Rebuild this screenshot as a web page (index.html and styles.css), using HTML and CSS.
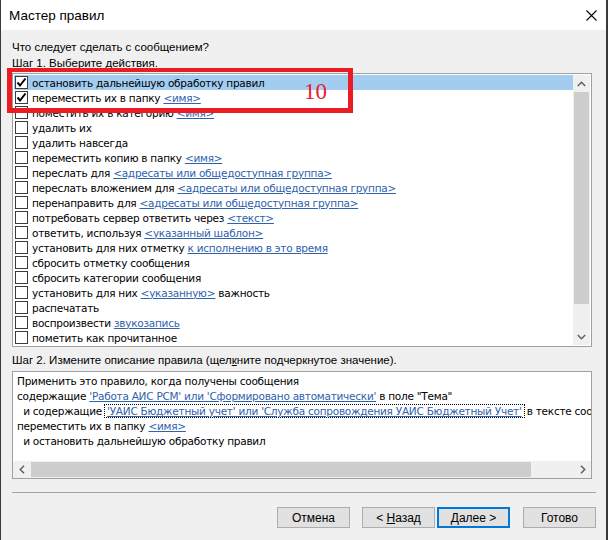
FILE: index.html
```html
<!DOCTYPE html>
<html lang="ru">
<head>
<meta charset="utf-8">
<title>Мастер правил</title>
<link rel="stylesheet" href="styles.css">
</head>
<body>
<div class="window">
  <div class="titlebar">
    <span class="title">Мастер правил</span>
    <span class="close"><svg width="11" height="11" viewBox="0 0 11 11"><path d="M0.5 0.5L10.5 10.5M10.5 0.5L0.5 10.5" stroke="#000" stroke-width="1.1" fill="none"/></svg></span>
  </div>
  <div class="content">
    <div class="label q">Что следует сделать с сообщением?</div>
    <div class="label">Шаг 1. Выберите действия.</div>
    <div class="listbox">
      <ul class="rows">
        <li class="row selected"><span class="cb"><svg width="11" height="11" viewBox="0 0 11 11"><path d="M1.5 5.5L4 8.5L9.5 1.5" stroke="#000" stroke-width="2" fill="none"/></svg></span>остановить дальнейшую обработку правил</li>
        <li class="row"><span class="cb"><svg width="11" height="11" viewBox="0 0 11 11"><path d="M1.5 5.5L4 8.5L9.5 1.5" stroke="#000" stroke-width="2" fill="none"/></svg></span>переместить их в папку&nbsp;<span class="link">&lt;имя&gt;</span></li>
        <li class="row"><span class="cb"></span>поместить их в категорию&nbsp;<span class="link">&lt;имя&gt;</span></li>
        <li class="row"><span class="cb"></span>удалить их</li>
        <li class="row"><span class="cb"></span>удалить навсегда</li>
        <li class="row"><span class="cb"></span>переместить копию в папку&nbsp;<span class="link">&lt;имя&gt;</span></li>
        <li class="row"><span class="cb"></span>переслать для&nbsp;<span class="link">&lt;адресаты или общедоступная группа&gt;</span></li>
        <li class="row"><span class="cb"></span>переслать вложением для&nbsp;<span class="link">&lt;адресаты или общедоступная группа&gt;</span></li>
        <li class="row"><span class="cb"></span>перенаправить для&nbsp;<span class="link">&lt;адресаты или общедоступная группа&gt;</span></li>
        <li class="row"><span class="cb"></span>потребовать сервер ответить через&nbsp;<span class="link">&lt;текст&gt;</span></li>
        <li class="row"><span class="cb"></span>ответить, используя&nbsp;<span class="link">&lt;указанный шаблон&gt;</span></li>
        <li class="row"><span class="cb"></span>установить для них отметку&nbsp;<span class="link">к исполнению в это время</span></li>
        <li class="row"><span class="cb"></span>сбросить отметку сообщения</li>
        <li class="row"><span class="cb"></span>сбросить категории сообщения</li>
        <li class="row"><span class="cb"></span>установить для них&nbsp;<span class="link">&lt;указанную&gt;</span>&nbsp;важность</li>
        <li class="row"><span class="cb"></span>распечатать</li>
        <li class="row"><span class="cb"></span>воспроизвести&nbsp;<span class="link">звукозапись</span></li>
        <li class="row"><span class="cb"></span>пометить как прочитанное</li>
      </ul>
      <div class="vscroll">
        <span class="sarrow"><svg width="9" height="6" viewBox="0 0 9 6"><path d="M0.8 5L4.5 1.3L8.2 5" stroke="#606060" stroke-width="1.5" fill="none"/></svg></span>
        <div class="vtrack"><div class="vthumb"></div></div>
        <span class="sarrow"><svg width="9" height="6" viewBox="0 0 9 6"><path d="M0.8 1L4.5 4.7L8.2 1" stroke="#606060" stroke-width="1.5" fill="none"/></svg></span>
      </div>
    </div>
    <div class="label step2">Шаг 2. Измените описание правила (щел<u>к</u>ните подчеркнутое значение).</div>
    <div class="desc">
      <div class="desc-text">
        <div class="dline">Применить это правило, когда получены сообщения</div>
        <div class="dline">содержащие <span class="link">'Работа АИС РСМ' или 'Сформировано автоматически'</span> в поле "Тема"</div>
        <div class="dline">  и содержащие <span class="link focus">'УАИС Бюджетный учет' или 'Служба сопровождения УАИС Бюджетный Учет'</span> в тексте сообщения</div>
        <div class="dline">переместить их в папку <span class="link">&lt;имя&gt;</span></div>
        <div class="dline">  и остановить дальнейшую обработку правил</div>
      </div>
      <div class="hscroll">
        <span class="sarrow"><svg width="6" height="9" viewBox="0 0 6 9"><path d="M5 0.8L1.3 4.5L5 8.2" stroke="#606060" stroke-width="1.5" fill="none"/></svg></span>
        <div class="htrack"><div class="hthumb"></div></div>
        <span class="sarrow"><svg width="6" height="9" viewBox="0 0 6 9"><path d="M1 0.8L4.7 4.5L1 8.2" stroke="#606060" stroke-width="1.5" fill="none"/></svg></span>
      </div>
    </div>
    <div class="separator"></div>
    <div class="buttons">
      <button class="btn">Отмена</button>
      <button class="btn back">&lt; <u>Н</u>азад</button>
      <button class="btn next default"><u>Д</u>алее &gt;</button>
      <button class="btn finish">Готово</button>
    </div>
  </div>
  <div class="annot-box"></div>
  <div class="annot-num">10</div>
</div>
</body>
</html>
```
FILE: styles.css
```css
html, body {
  margin: 0;
  padding: 0;
}
body {
  width: 608px;
  height: 540px;
  overflow: hidden;
  background: #3a3a3a;
  font-family: "Liberation Sans", Arial, sans-serif;
  color: #000;
}
.window {
  position: relative;
  margin-left: 1px;
  width: 605px;
  height: 540px;
  background: #f0f0f0;
}
.titlebar {
  height: 30px;
  background: #fff;
  display: flex;
  align-items: center;
  justify-content: space-between;
  padding-left: 8px;
  font-size: 13.5px;
}
.close {
  width: 30px;
  height: 30px;
  display: flex;
  align-items: center;
  justify-content: center;
}
.content {
  padding: 9px 0 0 11px;
}
.label {
  font-size: 11.5px;
  line-height: 16px;
  height: 16px;
  white-space: nowrap;
}
.label u {
  text-decoration: underline;
}
.listbox {
  margin-top: 2px;
  width: 580px;
  height: 274px;
  box-sizing: border-box;
  border: 1px solid #a0a0a0;
  background: #fff;
  padding: 1px;
  display: flex;
}
.rows {
  flex: 1;
  list-style: none;
  margin: 0;
  padding: 0;
  overflow: hidden;
  font-family: "DejaVu Sans", sans-serif;
  font-size: 10.5px;
  letter-spacing: -0.25px;
}
.row {
  height: 15px;
  display: flex;
  align-items: center;
  white-space: nowrap;
  padding-left: 1px;
}
.row.selected {
  background: #a2cdf1;
}
.cb {
  flex: none;
  width: 13px;
  height: 13px;
  box-sizing: border-box;
  border: 1px solid #3c3c3c;
  background: #fff;
  margin-right: 4px;
  display: flex;
  align-items: center;
  justify-content: center;
}
.link {
  color: #2f62ad;
  text-decoration: underline;
}
.vscroll {
  flex: none;
  width: 17px;
  background: #f0f0f0;
  display: flex;
  flex-direction: column;
}
.sarrow {
  flex: none;
  width: 17px;
  height: 17px;
  display: flex;
  align-items: center;
  justify-content: center;
}
.vtrack {
  flex: 1;
}
.vthumb {
  margin: 0 1px;
  height: 212px;
  background: #cdcdcd;
}
.step2 {
  margin-top: 5px;
}
.desc {
  margin-top: 3px;
  width: 580px;
  height: 108px;
  box-sizing: border-box;
  border: 1px solid #a0a0a0;
  background: #fff;
  display: flex;
  flex-direction: column;
}
.desc-text {
  flex: 1;
  overflow: hidden;
  padding: 2px 0 0 4px;
  font-family: "DejaVu Sans", sans-serif;
  font-size: 10.5px;
  letter-spacing: -0.25px;
  line-height: 15px;
}
.dline {
  white-space: pre;
  height: 15px;
}
.focus {
  outline: 1px dotted #000;
  outline-offset: 0;
  padding: 0 2px;
}
.hscroll {
  flex: none;
  height: 17px;
  background: #f0f0f0;
  display: flex;
}
.htrack {
  flex: 1;
  display: flex;
  align-items: center;
}
.hthumb {
  width: 500px;
  height: 15px;
  margin-left: 1px;
  background: #cdcdcd;
}
.separator {
  margin-top: 13px;
  width: 584px;
  border-top: 1px solid #a0a0a0;
}
.buttons {
  margin-top: 14px;
  width: 594px;
  box-sizing: border-box;
  padding-right: 10px;
  display: flex;
  justify-content: flex-end;
}
.btn {
  width: 73px;
  height: 21px;
  box-sizing: border-box;
  border: 1px solid #adadad;
  background: #e1e1e1;
  font-family: "Liberation Sans", Arial, sans-serif;
  font-size: 12px;
  color: #000;
  padding: 0;
  margin: 0;
}
.back {
  margin-left: 12px;
}
.next {
  margin-left: 2px;
}
.finish {
  margin-left: 13px;
}
.default {
  border: 2px solid #0078d7;
}
.annot-box {
  position: absolute;
  left: 6px;
  top: 68px;
  width: 346px;
  height: 45px;
  box-sizing: border-box;
  border: 5px solid #ec1c24;
  border-top-width: 4px;
}
.annot-num {
  position: absolute;
  left: 303px;
  top: 80px;
  font-family: "Liberation Serif", serif;
  font-size: 23px;
  line-height: 23px;
  color: #e8202a;
}
```
